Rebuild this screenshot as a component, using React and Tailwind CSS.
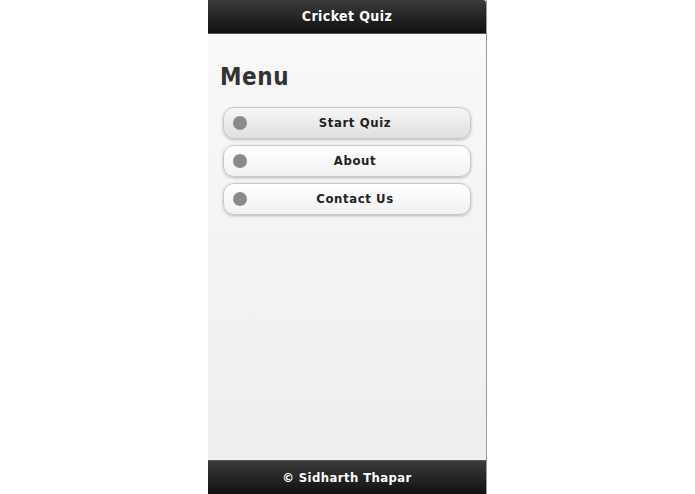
import React from "react";

const items = ["Start Quiz", "About", "Contact Us"];

const MenuButton = ({ label, active }) => (
  <button
    className={`flex items-center h-[32px] w-full rounded-[11px] border border-[#c9c9c9] shadow-[0_1px_3px_rgba(0,0,0,0.25)] px-[9px] ${
      active ? "bg-gradient-to-b from-[#f6f6f6] to-[#e0e0e0]" : "bg-gradient-to-b from-[#ffffff] to-[#f1f1f1]"
    }`}
  >
    <span className="w-[14px] h-[14px] rounded-full bg-[#8a8a8a] shrink-0" />
    <span className="flex-1 text-center text-[13px] font-bold tracking-[0.6px] text-[#222] pl-[2px]">
      {label}
    </span>
  </button>
);

export default function App() {
  return (
    <div className="w-[695px] h-[494px] bg-white" style={{ fontFamily: '"DejaVu Sans Condensed", "DejaVu Sans", sans-serif' }}>
      <div className="ml-[208px] w-[279px] h-full flex flex-col border-r border-[#9a9a9a]">
        <div className="h-[34px] shrink-0 bg-gradient-to-b from-[#3c3c3c] to-[#111] border-b border-[#555] flex items-center justify-center rounded-tr-[3px]">
          <span className="text-white text-[14px] font-bold tracking-[0.4px]">Cricket Quiz</span>
        </div>
        <div className="flex-1 bg-gradient-to-b from-[#f9f9f9] to-[#eeeeee] px-[12px]">
          <h1 className="mt-[26px] text-[24px] font-bold text-[#333] leading-[34px] tracking-[0.6px]">Menu</h1>
          <div className="mt-[13px] ml-[3px] mr-[3px] flex flex-col gap-[6px]">
            {items.map((item, i) => (
              <MenuButton key={item} label={item} active={i === 0} />
            ))}
          </div>
        </div>
        <div className="h-[34px] shrink-0 bg-gradient-to-b from-[#3c3c3c] to-[#111] border-t border-[#555] flex items-center justify-center">
          <span className="text-white text-[13px] font-bold tracking-[0.4px]">© Sidharth Thapar</span>
        </div>
      </div>
    </div>
  );
}
